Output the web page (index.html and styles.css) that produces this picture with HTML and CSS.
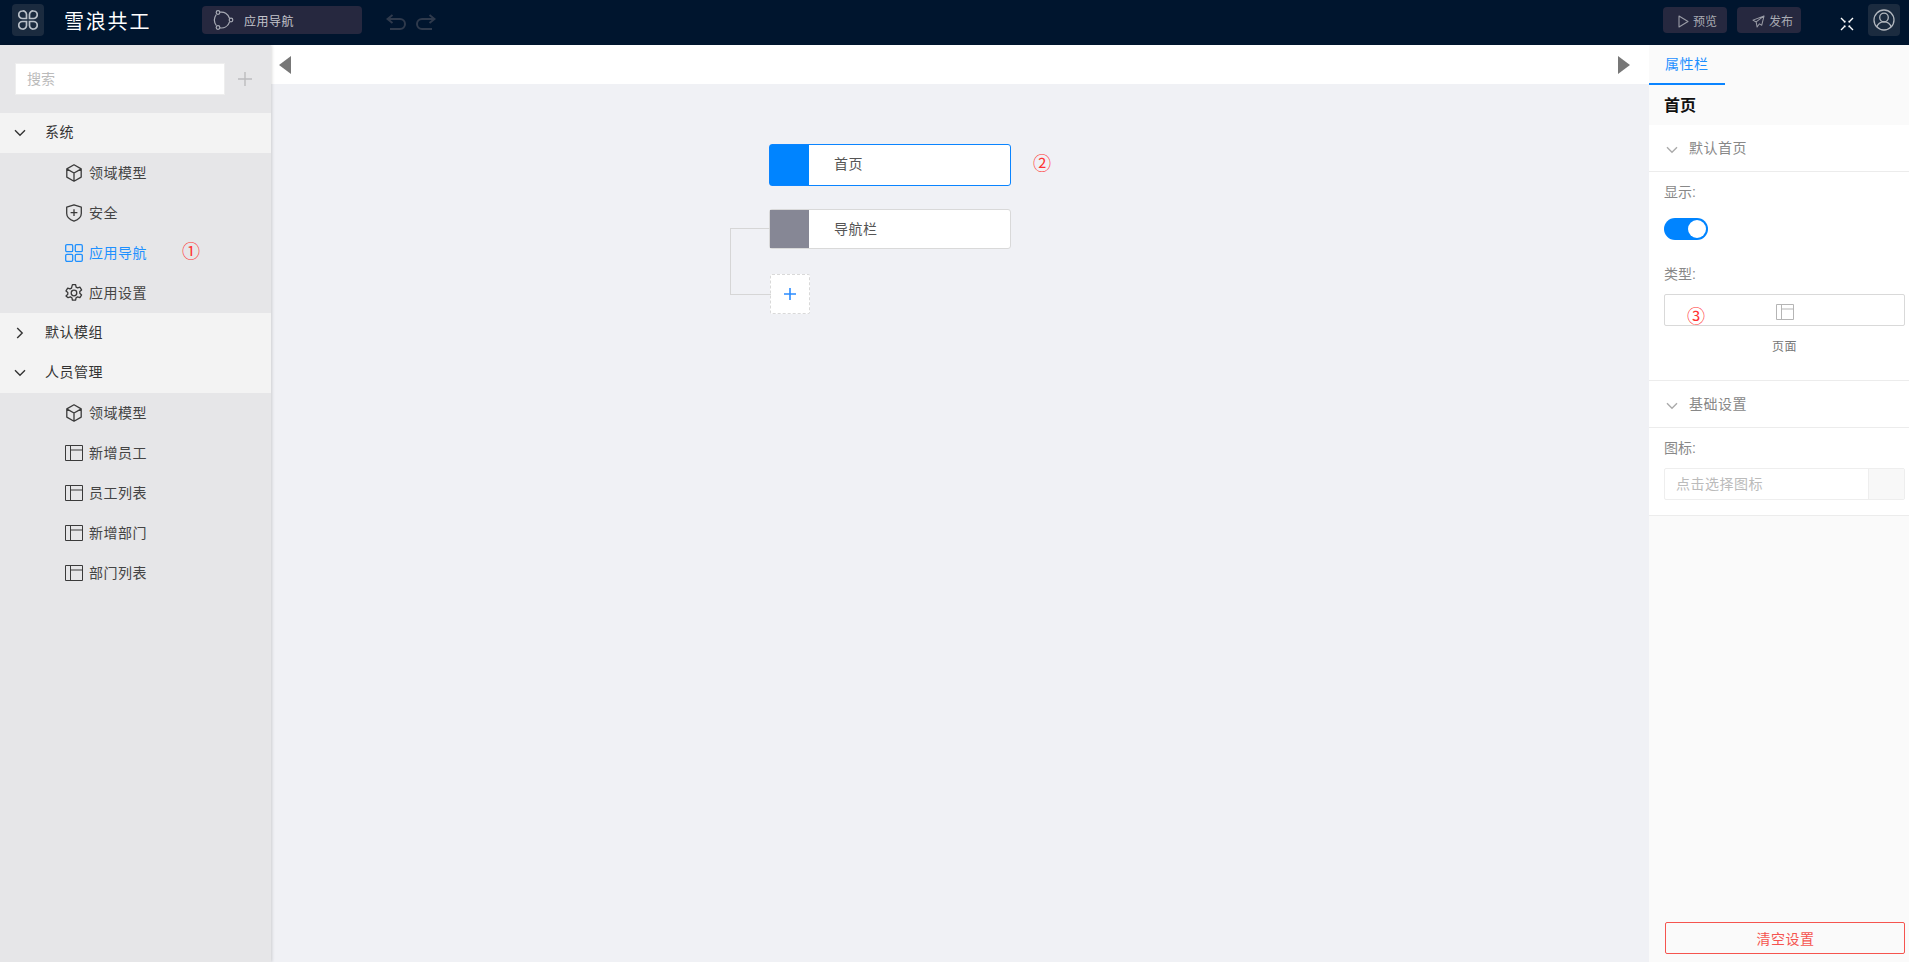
FILE: index.html
```html
<!DOCTYPE html>
<html lang="zh-CN">
<head>
  <meta charset="UTF-8">
  <meta name="viewport" content="width=device-width, initial-scale=1">
  <title>雪浪共工</title>
  <link rel="stylesheet" href="styles.css">
</head>
<body>
  <svg class="defs" width="0" height="0">
    <symbol id="i-cube" viewBox="0 0 18 18"><path d="M9 .8l7.200 4.100v8.200L9 17.200l-7.200-4.100V4.900zM2.100 5.100L9 9l6.900-3.900M9 9v8" fill="none" stroke="currentColor" stroke-width="1.300" stroke-linejoin="round"/></symbol>
    <symbol id="i-shield" viewBox="0 0 18 18"><path d="M9 .8l7.300 2.400v6.300c0 3.600-3 6.100-7.300 7.700-4.300-1.600-7.300-4.100-7.300-7.700V3.200zM9 5.300v6.800M5.600 8.700h6.800" fill="none" stroke="currentColor" stroke-width="1.300" stroke-linejoin="round"/></symbol>
    <symbol id="i-grid" viewBox="0 0 18 18"><g fill="none" stroke="currentColor" stroke-width="1.300"><rect x=".7" y=".7" width="7" height="7" rx="1.200"/><rect x="10.300" y=".7" width="7" height="7" rx="1.200"/><rect x=".7" y="10.300" width="7" height="7" rx="1.200"/><rect x="10.300" y="10.300" width="7" height="7" rx="1.200"/></g></symbol>
    <symbol id="i-gear" viewBox="0 0 18 18"><g fill="none" stroke="currentColor" stroke-width="1.300" stroke-linejoin="round"><circle cx="9" cy="9" r="2.800"/><path d="M7.400.7h3.200l.5 2.400 1.500.8 2.300-.8 1.700 2.800-1.800 1.600v1.800l1.800 1.600-1.700 2.800-2.300-.8-1.500.8-.5 2.400H7.400l-.5-2.400-1.500-.8-2.300.8L1 11.900l1.800-1.600V8.500L1 6.900l1.700-2.800 2.300.8 1.500-.8z"/></g></symbol>
    <symbol id="i-page" viewBox="0 0 18 16"><path d="M.5.500h17v15H.5zM5.500.500v15M5.500 5h12" fill="none" stroke="currentColor" stroke-width="1"/></symbol>
    <symbol id="i-down" viewBox="0 0 12 12"><path d="M1 3.200L6 8.200l5-5" fill="none" stroke="currentColor" stroke-width="1.400"/></symbol>
    <symbol id="i-right" viewBox="0 0 12 12"><path d="M3.200 1L8.200 6l-5 5" fill="none" stroke="currentColor" stroke-width="1.400"/></symbol>
  </svg>

  <header class="topbar">
    <div class="logo-box">
      <svg width="20" height="20" viewBox="0 0 20 20"><g fill="none" stroke="#b9c0c8" stroke-width="1.700"><path d="M4.500 1A3.500 3.500 0 0 1 8.500 4.500V8.500H4.500a3.500 3.500 0 0 1 0-7.500z"/><path d="M15.500 1a3.500 3.500 0 0 0-4 3.500V8.500h4a3.500 3.500 0 0 0 0-7.500z"/><path d="M4.500 19a3.500 3.500 0 0 0 4-3.500V11.500H4.500a3.500 3.500 0 0 0 0 7.500z"/><path d="M15.500 19a3.500 3.500 0 0 1-4-3.500V11.500h4a3.500 3.500 0 0 1 0 7.500z"/></g></svg>
    </div>
    <div class="brand">雪浪共工</div>
    <div class="nav-pill">
      <svg width="22" height="22" viewBox="0 0 22 22"><g fill="none" stroke="#a8abb5" stroke-width="1.200"><circle cx="6" cy="3.500" r="1.800"/><circle cx="19" cy="11" r="1.800"/><circle cx="6" cy="18.500" r="1.800"/><path d="M8 3.200c4-.8 8 1.500 9.500 6M17.500 13c-1.500 4.500-5.500 6.500-9.500 5.800M4.300 16.500c-2.500-3.500-2.500-7.500 0-11"/></g></svg>
      <span>应用导航</span>
    </div>
    <div class="history">
      <svg width="20" height="16" viewBox="0 0 20 16"><path d="M6.500 1L1.500 5l5 4M2 5h12a5 5 0 0 1 0 10H4" fill="none" stroke="#2f3a4c" stroke-width="2"/></svg>
      <svg width="20" height="16" viewBox="0 0 20 16"><path d="M13.500 1l5 4-5 4M18 5H6a5 5 0 0 0 0 10h10" fill="none" stroke="#2f3a4c" stroke-width="2"/></svg>
    </div>
    <div class="topbar-right">
      <button class="top-btn"><svg width="11" height="13" viewBox="0 0 11 13"><path d="M1 1l9 5.500L1 12z" fill="none" stroke="#9a9ca6" stroke-width="1.100" stroke-linejoin="round"/></svg>预览</button>
      <button class="top-btn"><svg width="13" height="13" viewBox="0 0 14 14"><path d="M13 1L1 5.500l3.500 2L5.500 13 8 9.500 10.500 11zM4.500 7.500L13 1" fill="none" stroke="#9a9ca6" stroke-width="1.100" stroke-linejoin="round"/></svg>发布</button>
      <svg class="full-icon" width="14" height="14" viewBox="0 0 14 14"><path d="M1 1l4 4M13 1L9 5M1 13l4-4M13 13L9 9" stroke="#fff" stroke-width="1.400"/><path d="M3.500 5.500h2v-2zM10.500 5.500h-2v-2zM3.500 8.500h2v2zM10.500 8.500h-2v2z" fill="#fff"/></svg>
      <div class="user-box">
        <svg width="22" height="22" viewBox="0 0 22 22"><g fill="none" stroke="#b3b8bf" stroke-width="1.300"><circle cx="11" cy="11" r="10"/><circle cx="11" cy="8.500" r="4.300"/><path d="M3.800 18c1-3.500 3.800-5.200 7.200-5.200s6.200 1.700 7.200 5.200"/></g></svg>
      </div>
    </div>
  </header>

  <div class="workspace">
    <aside class="sidebar">
      <div class="search-row">
        <div class="search-box">搜索</div>
        <svg class="add-icon" width="16" height="16" viewBox="0 0 16 16"><path d="M8 1v14M1 8h14" stroke="#bcbcbe" stroke-width="1.400"/></svg>
      </div>

      <div class="group"><svg class="caret" width="12" height="12"><use href="#i-down"/></svg>系统</div>
      <div class="item"><svg width="18" height="18"><use href="#i-cube"/></svg>领域模型</div>
      <div class="item"><svg width="18" height="18"><use href="#i-shield"/></svg>安全</div>
      <div class="item active"><svg width="18" height="18"><use href="#i-grid"/></svg>应用导航<span class="mark mark-1">①</span></div>
      <div class="item"><svg width="18" height="18"><use href="#i-gear"/></svg>应用设置</div>
      <div class="group"><svg class="caret" width="12" height="12"><use href="#i-right"/></svg>默认模组</div>
      <div class="group"><svg class="caret" width="12" height="12"><use href="#i-down"/></svg>人员管理</div>
      <div class="item"><svg width="18" height="18"><use href="#i-cube"/></svg>领域模型</div>
      <div class="item"><svg width="18" height="16"><use href="#i-page"/></svg>新增员工</div>
      <div class="item"><svg width="18" height="16"><use href="#i-page"/></svg>员工列表</div>
      <div class="item"><svg width="18" height="16"><use href="#i-page"/></svg>新增部门</div>
      <div class="item"><svg width="18" height="16"><use href="#i-page"/></svg>部门列表</div>
    </aside>

    <main class="main">
      <div class="toolbar">
        <span class="arrow arrow-left"></span>
        <span class="arrow arrow-right"></span>
      </div>
      <div class="canvas">
        <div class="node selected">
          <div class="node-color"></div>
          <div class="node-name">首页</div>
          <span class="mark mark-2">②</span>
        </div>
        <div class="node">
          <div class="node-color"></div>
          <div class="node-name">导航栏</div>
          <span class="link-line"></span>
        </div>
        <div class="node-add">
          <svg width="14" height="14" viewBox="0 0 14 14"><path d="M7 1v12M1 7h12" stroke="#2b8cff" stroke-width="1.600"/></svg>
          <span class="link-line"></span>
        </div>
      </div>
    </main>

    <aside class="props">
      <div class="tabs"><div class="tab">属性栏</div></div>
      <div class="props-title">首页</div>

      <section class="prop-section">
        <div class="section-head"><svg width="12" height="12"><use href="#i-down"/></svg>默认首页</div>
        <div class="section-body body-show">
          <div class="field-label">显示:</div>
          <div class="switch"><span class="knob"></span></div>
          <div class="field-label label-type">类型:</div>
          <div class="type-box">
            <svg width="18" height="16"><use href="#i-page"/></svg>
            <span class="mark mark-3">③</span>
          </div>
          <div class="type-name">页面</div>
        </div>
      </section>

      <section class="prop-section">
        <div class="section-head"><svg width="12" height="12"><use href="#i-down"/></svg>基础设置</div>
        <div class="section-body body-basic">
          <div class="field-label">图标:</div>
          <div class="icon-input">
            <div class="icon-text">点击选择图标</div>
            <div class="icon-addon"></div>
          </div>
        </div>
      </section>

      <button class="clear-btn">清空设置</button>
    </aside>
  </div>
</body>
</html>
```

FILE: styles.css
```css
* {
  box-sizing: border-box;
}
html, body {
  height: 100%;
}
body {
  margin: 0;
  display: flex;
  flex-direction: column;
  overflow: hidden;
  font-family: "Liberation Sans", "Noto Sans CJK SC", sans-serif;
  font-size: 14px;
  color: #333;
  background: #f0f1f5;
}
.defs {
  position: absolute;
}
button {
  font-family: inherit;
  cursor: pointer;
}

/* top bar */
.topbar {
  height: 45px;
  flex: none;
  display: flex;
  align-items: center;
  padding: 0 0 5px 12px;
  background: #00152e;
}
.logo-box, .user-box {
  width: 32px;
  height: 32px;
  display: flex;
  align-items: center;
  justify-content: center;
  border-radius: 4px;
  background: #1b2b3f;
}
.brand {
  margin-left: 20px;
  width: 138px;
  font-size: 20px;
  letter-spacing: 1.800px;
  color: #fff;
}
.nav-pill {
  width: 160px;
  height: 28px;
  display: flex;
  align-items: center;
  gap: 10px;
  padding-left: 10px;
  border-radius: 4px;
  background: #26283f;
  font-size: 12px;
  letter-spacing: .5px;
  color: #c4c5cc;
}
.history {
  margin: 4px 0 0 24px;
  display: flex;
  gap: 10px;
}
.topbar-right {
  margin-left: auto;
  padding-right: 9px;
  display: flex;
  align-items: center;
}
.top-btn {
  width: 64px;
  height: 26px;
  margin-right: 10px;
  padding: 0 0 0 15px;
  display: flex;
  align-items: center;
  gap: 4px;
  border: none;
  border-radius: 4px;
  background: #26283f;
  font-size: 12px;
  color: #a9abb3;
}
.top-btn svg {
  margin-top: 3px;
}
.full-icon {
  margin: 7px 14px 0 29px;
}

/* layout */
.workspace {
  flex: 1;
  display: flex;
  min-height: 0;
}

/* left tree */
.sidebar {
  width: 271px;
  flex: none;
  background: #e6e6e8;
  box-shadow: 1px 0 3px rgba(0,0,0,.15);
  z-index: 1;
}
.search-row {
  height: 68px;
  display: flex;
  align-items: center;
  padding: 0 15px;
}
.search-box {
  width: 210px;
  height: 32px;
  line-height: 30px;
  padding-left: 11px;
  background: #fff;
  border: 1px solid #eee;
  color: #bbb;
}
.add-icon {
  margin-left: 12px;
}
.group, .item {
  position: relative;
  height: 40px;
  display: flex;
  align-items: center;
  letter-spacing: .5px;
}
.group {
  background: #f3f3f3;
  padding: 0 0 4px 14px;
}
.caret {
  margin: 4px 19px 0 0;
  color: #333;
}
.item {
  padding: 0 0 2px 65px;
  gap: 6px;
  color: #444;
}
.item svg {
  flex: none;
  margin-top: 2px;
  color: #3a3a3a;
}
.item.active, .item.active svg {
  color: #1e90ff;
}
.mark {
  position: absolute;
  font-size: 18px;
  line-height: 20px;
  letter-spacing: 0;
  color: #f33;
}
.mark-1 {
  left: 182px;
  top: 9px;
}

/* middle */
.main {
  flex: 1;
  min-width: 0;
  display: flex;
  flex-direction: column;
}
.toolbar {
  height: 39px;
  flex: none;
  display: flex;
  justify-content: space-between;
  align-items: center;
  padding: 0 19px 0 8px;
  background: #fff;
}
.arrow {
  width: 0;
  height: 0;
  border-top: 9px solid transparent;
  border-bottom: 9px solid transparent;
}
.arrow-left {
  border-right: 12px solid #777;
}
.arrow-right {
  border-left: 12px solid #777;
}
.canvas {
  flex: 1;
  padding: 60px 0 0 498px;
}
.node {
  position: relative;
  width: 242px;
  height: 40px;
  margin-bottom: 25px;
  display: flex;
  background: #fff;
  border: 1px solid #d9d9d9;
  border-radius: 3px;
}
.node.selected {
  height: 42px;
  margin-bottom: 23px;
  border-color: #0a84ff;
}
.node-color {
  width: 39px;
  flex: none;
  background: #868795;
}
.selected .node-color {
  background: #0084ff;
}
.node-name {
  padding: 0 0 3px 25px;
  align-self: center;
  letter-spacing: .5px;
  color: #555;
}
.selected .node-name {
  padding-bottom: 5px;
}
.mark-2 {
  left: 263px;
  top: 9px;
}
.node-add {
  position: relative;
  width: 40px;
  height: 40px;
  margin-left: 1px;
  display: flex;
  align-items: center;
  justify-content: center;
  background: #fff;
  border: 1px dashed #d9d9d9;
  border-radius: 2px;
}
.link-line {
  position: absolute;
  right: 100%;
  top: 18px;
  width: 40px;
  border-top: 1px solid #d6d6d6;
}
.node-add .link-line {
  top: -47px;
  height: 67px;
  width: 41px;
  border-top: none;
  border-left: 1px solid #d6d6d6;
  border-bottom: 1px solid #d6d6d6;
}

/* right panel */
.props {
  width: 260px;
  flex: none;
  position: relative;
  background: #fafafa;
}
.tabs {
  height: 40px;
}
.tab {
  width: 76px;
  height: 40px;
  line-height: 38px;
  padding-left: 16px;
  border-bottom: 2px solid #0a84ff;
  letter-spacing: .5px;
  color: #1e90ff;
}
.props-title {
  height: 40px;
  line-height: 41px;
  padding-left: 15px;
  font-size: 16px;
  font-weight: bold;
  color: #111;
}
.prop-section {
  background: #fff;
  border-bottom: 1px solid #ececec;
}
.section-head {
  height: 47px;
  display: flex;
  align-items: center;
  gap: 11px;
  padding: 0 0 3px 17px;
  border-bottom: 1px solid #ececec;
  letter-spacing: .5px;
  color: #888;
}
.section-head svg {
  margin-top: 6px;
  color: #aaa;
}
.section-body {
  padding: 10px 4px 0 15px;
}
.body-show {
  height: 208px;
}
.body-basic {
  height: 87px;
}
.field-label {
  height: 21px;
  line-height: 21px;
  color: #888;
}
.switch {
  width: 44px;
  height: 22px;
  margin-top: 15px;
  display: flex;
  justify-content: flex-end;
  padding: 2px;
  border-radius: 11px;
  background: #0084ff;
}
.knob {
  width: 18px;
  height: 18px;
  border-radius: 50%;
  background: #fff;
}
.label-type {
  margin-top: 24px;
}
.type-box {
  position: relative;
  width: 241px;
  height: 32px;
  margin-top: 9px;
  padding-top: 4px;
  display: flex;
  align-items: center;
  justify-content: center;
  border: 1px solid #d9d9d9;
  border-radius: 2px;
  color: #b5b5b5;
}
.mark-3 {
  left: 22px;
  top: 12px;
}
.type-name {
  margin-top: 11px;
  text-align: center;
  font-size: 12px;
  letter-spacing: .5px;
  color: #777;
}
.icon-input {
  width: 241px;
  height: 32px;
  margin-top: 9px;
  display: flex;
  border: 1px solid #eee;
  border-radius: 2px;
}
.icon-text {
  flex: 1;
  line-height: 30px;
  padding-left: 11px;
  letter-spacing: .5px;
  color: #bbb;
}
.icon-addon {
  width: 36px;
  background: #f8f8f8;
  border-left: 1px solid #eee;
}
.clear-btn {
  position: absolute;
  left: 16px;
  bottom: 8px;
  width: 240px;
  height: 32px;
  padding: 0 0 1px 1px;
  background: transparent;
  border: 1px solid #f5544f;
  border-radius: 2px;
  font-size: 14px;
  letter-spacing: .5px;
  color: #f5544f;
}
```
